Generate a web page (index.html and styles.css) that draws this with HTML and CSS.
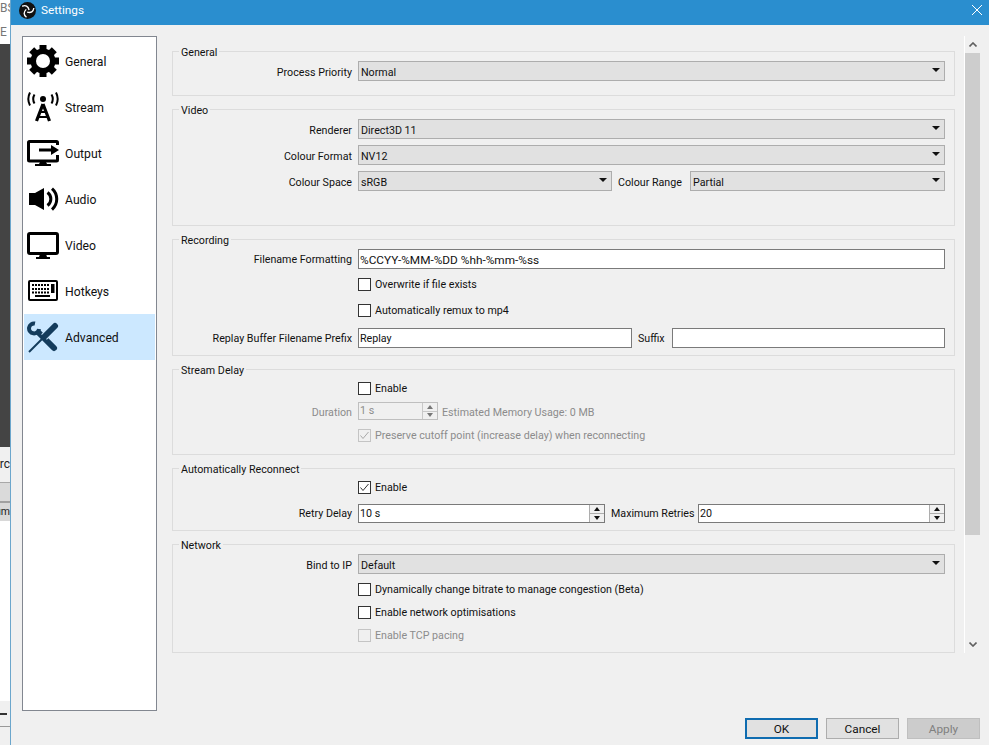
FILE: index.html
```html
<!DOCTYPE html>
<html lang="en">
<head>
    <meta charset="UTF-8">
    <title>Settings</title>
    <link rel="stylesheet" href="styles.css">
</head>
<body>
    <!-- the app behind the dialog, only a sliver shows -->
    <div class="backdrop">
        <div class="bd-top"><span>BS</span><span>E</span></div>
        <div class="bd-dark"></div>
        <div class="bd-src">rc</div>
        <div class="bd-band"></div>
        <div class="bd-sum">um</div>
        <div class="bd-white"></div>
        <div class="bd-foot"><i></i></div>
        <div class="bd-end"></div>
    </div>

    <div class="window">
        <div class="titlebar">
            <svg class="logo" viewBox="0 0 16 16">
                <circle cx="8" cy="8" r="8" fill="#111"/>
                <g fill="none" stroke="#fff" stroke-width="1.300">
                    <path d="M3 4Q8 2 9.500 7.500"/>
                    <path d="M3 4Q8 2 9.500 7.500" transform="rotate(120 8 8)"/>
                    <path d="M3 4Q8 2 9.500 7.500" transform="rotate(240 8 8)"/>
                </g>
            </svg>
            <span class="title">Settings</span>
            <svg class="close" viewBox="0 0 10 10"><path d="M0 0L10 10M10 0L0 10" stroke="#fff" stroke-width="1"/></svg>
        </div>

        <div class="body">
            <div class="sidebar">
                <div class="nav-item">
                    <svg class="nav-icon" viewBox="0 0 32 32">
                        <g fill="#000">
                            <rect x="12.500" y="0" width="7" height="32"/>
                            <rect x="0" y="12.500" width="32" height="7"/>
                            <rect x="12.500" y="0" width="7" height="32" transform="rotate(45 16 16)"/>
                            <rect x="12.500" y="0" width="7" height="32" transform="rotate(-45 16 16)"/>
                            <circle cx="16" cy="16" r="12.500"/>
                        </g>
                        <circle cx="16" cy="16" r="7" fill="#fff"/>
                    </svg>
                    <span>General</span>
                </div>
                <div class="nav-item">
                    <svg class="nav-icon" viewBox="0 0 32 32">
                        <circle cx="16" cy="8" r="3"/>
                        <g fill="none" stroke="#000" stroke-width="2">
                            <path d="M7.500 3.500a9 9 0 0 0 0 9"/>
                            <path d="M24.500 3.500a9 9 0 0 1 0 9"/>
                            <path d="M3 1.500a14 14 0 0 0 0 13"/>
                            <path d="M29 1.500a14 14 0 0 1 0 13"/>
                        </g>
                        <g fill="none" stroke="#000">
                            <path d="M16 13L9.500 30M16 13L22.500 30" stroke-width="3.200"/>
                            <path d="M12 21H20M10 26H22" stroke-width="2.200"/>
                        </g>
                    </svg>
                    <span>Stream</span>
                </div>
                <div class="nav-item">
                    <svg class="nav-icon" viewBox="0 0 32 32">
                        <path d="M30.500 8V5.500a1 1 0 0 0-1-1H2.500a1 1 0 0 0-1 1V23a1 1 0 0 0 1 1H29.500a1 1 0 0 0 1-1V18" fill="none" stroke="#000" stroke-width="3"/>
                        <path d="M12 11.500H24V8L32 13L24 18V14.500H12z"/>
                        <path d="M13 25H19L20 27H24V29H8V27H12z"/>
                    </svg>
                    <span>Output</span>
                </div>
                <div class="nav-item">
                    <svg class="nav-icon" viewBox="0 0 32 32">
                        <path d="M2 10H8L17 5V27L8 22H2z"/>
                        <g fill="none" stroke="#000" stroke-width="3">
                            <path d="M20.500 9.500a8 8 0 0 1 0 13"/>
                            <path d="M25 5.500a14 14 0 0 1 0 21"/>
                        </g>
                    </svg>
                    <span>Audio</span>
                </div>
                <div class="nav-item">
                    <svg class="nav-icon" viewBox="0 0 32 32">
                        <rect x="1.500" y="4.500" width="29" height="20" rx="1.500" fill="none" stroke="#000" stroke-width="3"/>
                        <path d="M13 25H19L20 28H23V30H9V28H12z"/>
                    </svg>
                    <span>Video</span>
                </div>
                <div class="nav-item">
                    <svg class="nav-icon" viewBox="0 0 32 32">
                        <rect x="1" y="5" width="30" height="21" rx="2"/>
                        <rect x="3" y="7" width="26" height="17" fill="#fff"/>
                        <g fill="none" stroke="#000" stroke-width="2">
                            <path d="M5 10H22" stroke-dasharray="2 1"/>
                            <path d="M5 14H22" stroke-dasharray="2 1"/>
                            <path d="M5 17.500H22" stroke-dasharray="2 1"/>
                            <path d="M8 21H23"/>
                        </g>
                        <rect x="24" y="9" width="3.500" height="9"/>
                    </svg>
                    <span>Hotkeys</span>
                </div>
                <div class="nav-item active">
                    <svg class="nav-icon" viewBox="0 0 32 32">
                        <g fill="none" stroke="#143c5c">
                            <path d="M8 2.500A5 5 0 1 0 12 8" stroke-width="4"/>
                            <path d="M12 12L27 27" stroke-width="6" stroke-linecap="round"/>
                            <path d="M28 5L17 16" stroke="#cce8ff" stroke-width="8"/>
                            <path d="M28 5L17 16" stroke-width="6" stroke-linecap="round"/>
                            <path d="M17 16L2 31" stroke-width="2"/>
                        </g>
                    </svg>
                    <span>Advanced</span>
                </div>
            </div>

            <div class="content">
                <div class="groups">
                    <div class="group">
                        <div class="group-title">General</div>
                        <div class="rows pt-general">
                            <div class="row">
                                <label>Process Priority</label>
                                <div class="combo">Normal</div>
                            </div>
                        </div>
                    </div>

                    <div class="group">
                        <div class="group-title">Video</div>
                        <div class="rows pt-video">
                            <div class="row">
                                <label>Renderer</label>
                                <div class="combo">Direct3D 11</div>
                            </div>
                            <div class="row gap-4">
                                <label>Colour Format</label>
                                <div class="combo">NV12</div>
                            </div>
                            <div class="row gap-4">
                                <label>Colour Space</label>
                                <div class="pair">
                                    <div class="combo w-space">sRGB</div>
                                    <label class="pair-label w-range">Colour Range</label>
                                    <div class="combo">Partial</div>
                                </div>
                            </div>
                        </div>
                    </div>

                    <div class="group">
                        <div class="group-title">Recording</div>
                        <div class="rows pt-rec">
                            <div class="row">
                                <label>Filename Formatting</label>
                                <div class="input format">%CCYY-%MM-%DD %hh-%mm-%ss</div>
                            </div>
                            <div class="row gap-3">
                                <label></label>
                                <div class="check"><span class="box"></span>Overwrite if file exists</div>
                            </div>
                            <div class="row gap-4">
                                <label></label>
                                <div class="check"><span class="box"></span>Automatically remux to mp4</div>
                            </div>
                            <div class="row gap-6">
                                <label>Replay Buffer Filename Prefix</label>
                                <div class="pair">
                                    <div class="input w-prefix">Replay</div>
                                    <label class="pair-label w-suffix">Suffix</label>
                                    <div class="input"></div>
                                </div>
                            </div>
                        </div>
                    </div>

                    <div class="group">
                        <div class="group-title">Stream Delay</div>
                        <div class="rows pt-delay">
                            <div class="row">
                                <label></label>
                                <div class="check"><span class="box"></span>Enable</div>
                            </div>
                            <div class="row gap-2 disabled">
                                <label>Duration</label>
                                <div class="pair">
                                    <div class="input spin w-duration">1 s
                                        <span class="spin-btns"><i class="up"></i><i class="down"></i></span>
                                    </div>
                                    <span class="note">Estimated Memory Usage: 0 MB</span>
                                </div>
                            </div>
                            <div class="row gap-1 disabled">
                                <label></label>
                                <div class="check">
                                    <span class="box">
                                        <svg viewBox="0 0 13 13"><path d="M2.500 6.500L5 9.500L10.500 3" fill="none" stroke="#a8a8a8"/></svg>
                                    </span>Preserve cutoff point (increase delay) when reconnecting
                                </div>
                            </div>
                        </div>
                    </div>

                    <div class="group">
                        <div class="group-title">Automatically Reconnect</div>
                        <div class="rows pt-reconnect">
                            <div class="row">
                                <label></label>
                                <div class="check">
                                    <span class="box">
                                        <svg viewBox="0 0 13 13"><path d="M2.500 6.500L5 9.500L10.500 3" fill="none" stroke="#333"/></svg>
                                    </span>Enable
                                </div>
                            </div>
                            <div class="row gap-4">
                                <label>Retry Delay</label>
                                <div class="pair">
                                    <div class="input spin w-retry">10 s
                                        <span class="spin-btns"><i class="up"></i><i class="down"></i></span>
                                    </div>
                                    <label class="pair-label w-max">Maximum Retries</label>
                                    <div class="input spin">20
                                        <span class="spin-btns"><i class="up"></i><i class="down"></i></span>
                                    </div>
                                </div>
                            </div>
                        </div>
                    </div>

                    <div class="group">
                        <div class="group-title">Network</div>
                        <div class="rows pt-network">
                            <div class="row">
                                <label>Bind to IP</label>
                                <div class="combo">Default</div>
                            </div>
                            <div class="row gap-2">
                                <label></label>
                                <div class="check"><span class="box"></span>Dynamically change bitrate to manage congestion (Beta)</div>
                            </div>
                            <div class="row gap-1">
                                <label></label>
                                <div class="check"><span class="box"></span>Enable network optimisations</div>
                            </div>
                            <div class="row gap-1 disabled">
                                <label></label>
                                <div class="check"><span class="box"></span>Enable TCP pacing</div>
                            </div>
                        </div>
                    </div>
                </div>

                <div class="scrollbar">
                    <svg class="arrow" viewBox="0 0 8 5"><path d="M.5 4.500L4 1L7.500 4.500" fill="none" stroke="#606060" stroke-width="1.600"/></svg>
                    <div class="thumb"></div>
                    <svg class="arrow arrow-down" viewBox="0 0 8 5"><path d="M.5 .5L4 4L7.500 .5" fill="none" stroke="#606060" stroke-width="1.600"/></svg>
                </div>
            </div>
        </div>

        <div class="buttons">
            <button class="default">OK</button>
            <button>Cancel</button>
            <button class="off">Apply</button>
        </div>
    </div>
</body>
</html>
```

FILE: styles.css
```css
* {
    box-sizing: border-box;
}
html, body {
    margin: 0;
    height: 100%;
}
body {
    display: flex;
    width: 989px;
    height: 745px;
    overflow: hidden;
    font-family: 'Roboto', 'Noto Sans', sans-serif;
    font-size: 10.700px;
    color: #111;
    background: #f0f0f0;
}

/* app behind the dialog */
.backdrop {
    width: 10px;
    height: 745px;
    flex: none;
    overflow: hidden;
    color: #444;
    white-space: nowrap;
    font-size: 12px;
}
.bd-top {
    height: 44px;
    background: #fff;
    color: #777;
    display: flex;
    flex-direction: column;
    padding-top: 1px;
    gap: 10px;
}
.bd-dark {
    height: 403px;
    background: #444;
}
.bd-src {
    height: 35px;
    background: #f0f0f0;
    line-height: 34px;
    color: #222;
    direction: rtl;
}
.bd-band {
    height: 21px;
    background: #dadada;
    border-top: 1px solid #a8a8a8;
    border-bottom: 2px solid #a0a0a0;
}
.bd-sum {
    height: 18px;
    background: #d8d8d8;
    line-height: 17px;
    color: #222;
    direction: rtl;
    font-size: 10.500px;
}
.bd-white {
    height: 180px;
    background: #fff;
}
.bd-foot {
    height: 26px;
    background: #f0f0f0;
    border-bottom: 1px solid #999;
    padding-top: 12px;
}
.bd-foot i {
    display: block;
    width: 7px;
    height: 2px;
    background: #333;
}
.bd-end {
    height: 18px;
    background: #f0f0f0;
}

/* dialog */
.window {
    flex: 1;
    display: flex;
    flex-direction: column;
    border-left: 1px solid #6ba6cc;
}
.titlebar {
    height: 25px;
    flex: none;
    background: #2a8ecf;
    color: #fff;
    display: flex;
    align-items: center;
    padding: 0 7px 0 8px;
    font-size: 11.800px;
}
.logo {
    width: 17px;
    height: 17px;
    margin-bottom: 5px;
}
.title {
    margin-left: 5px;
    margin-bottom: 6px;
}
.close {
    width: 10px;
    height: 10px;
    margin-left: auto;
    margin-bottom: 6px;
}
.body {
    height: 686px;
    flex: none;
    display: flex;
    padding: 11px 9px 0 11px;
}

/* left list */
.sidebar {
    width: 135px;
    height: 675px;
    flex: none;
    background: #fff;
    border: 1px solid #828790;
    padding: 1px;
}
.nav-item {
    height: 46px;
    display: flex;
    align-items: center;
    gap: 6px;
    padding-left: 3px;
    font-size: 12.200px;
}
.nav-item span {
    margin-top: 2px;
}
.nav-item.active {
    background: #cce8ff;
}
.nav-icon {
    width: 32px;
    height: 32px;
    flex: none;
}

/* settings groups */
.content {
    flex: 1;
    display: flex;
    padding-left: 15px;
}
.groups {
    width: 783px;
    flex: none;
    padding-top: 15px;
}
.group {
    border: 1px solid #dcdcdc;
    margin-bottom: 13px;
    padding-right: 9px;
}
.group-title {
    width: fit-content;
    height: 14px;
    margin: -8px 0 0 6px;
    padding: 0 2px;
    line-height: 18px;
    background: #f0f0f0;
}
.rows {
    display: flex;
    flex-direction: column;
}
.pt-general { padding: 3px 0 12px; }
.pt-video { padding: 3px 0 32px; }
.pt-rec { padding: 2px 0 6px; }
.pt-delay { padding: 1px 0 8px; }
.pt-reconnect { padding: 1px 0 6px; }
.pt-network { padding: 3px 0 6px; }

.row {
    height: 22px;
    display: flex;
    align-items: center;
}
.gap-1 { margin-top: 1px; }
.gap-2 { margin-top: 2px; }
.gap-3 { margin-top: 3px; }
.gap-4 { margin-top: 4px; }
.gap-6 { margin-top: 6px; }

.row > label {
    width: 179px;
    flex: none;
    margin-right: 6px;
    text-align: right;
}
.pair {
    flex: 1;
    display: flex;
    align-items: center;
}
.pair-label {
    flex: none;
    padding-left: 6px;
}
.w-range { width: 78px; }
.w-suffix { width: 40px; }
.w-max { width: 93px; }

.combo {
    flex: 1;
    height: 20px;
    margin-bottom: 2px;
    line-height: 21px;
    padding-left: 2px;
    background: #e1e1e1;
    border: 1px solid #adadad;
    position: relative;
}
/* small black drop arrow */
.combo::after {
    content: '';
    position: absolute;
    right: 4px;
    top: 6px;
    width: 0;
    height: 0;
    border-left: 4px solid transparent;
    border-right: 4px solid transparent;
    border-top: 4px solid #111;
}
.input {
    flex: 1;
    height: 20px;
    line-height: 20px;
    padding-left: 1px;
    background: #fff;
    border: 1px solid #7a7a7a;
}
.format {
    font-size: 11.800px;
}
.w-space { width: 254px; flex: none; }
.w-prefix { width: 274px; flex: none; }

.spin {
    position: relative;
    height: 19px;
    margin-top: 1px;
    line-height: 17px;
    white-space: nowrap;
}
.w-duration { width: 80px; height: 18px; line-height: 16px; margin: 0 0 2px; flex: none; }
.w-retry { width: 247px; flex: none; }
.spin-btns {
    position: absolute;
    right: 0;
    top: 0;
    bottom: 0;
    width: 15px;
    display: flex;
    flex-direction: column;
    background: #f0f0f0;
    border-left: 1px solid #adadad;
}
.spin-btns i {
    flex: 1;
    display: flex;
    align-items: center;
    justify-content: center;
}
.spin-btns .up {
    border-bottom: 1px solid #adadad;
}
.spin-btns i::before {
    content: '';
    border-left: 3px solid transparent;
    border-right: 3px solid transparent;
}
.spin-btns .up::before {
    border-bottom: 4px solid #111;
}
.spin-btns .down::before {
    border-top: 4px solid #111;
}

.check {
    display: flex;
    align-items: center;
}
.box {
    width: 13px;
    height: 13px;
    flex: none;
    margin-right: 4px;
    background: #fff;
    border: 1px solid #333;
    display: flex;
}
.box svg {
    width: 13px;
    height: 13px;
    margin: -1px;
}
.note {
    margin-left: 4px;
}

.disabled {
    color: #8c8c8c;
}
.disabled .input {
    background: #f0f0f0;
    border-color: #bfbfbf;
}
.disabled .box {
    background: #f0f0f0;
    border-color: #c4c4c4;
}
.disabled .spin-btns {
    border-color: #c8c8c8;
}
.disabled .spin-btns .up {
    border-bottom-color: #c8c8c8;
}
.disabled .spin-btns .up::before {
    border-bottom-color: #777;
}
.disabled .spin-btns .down::before {
    border-top-color: #777;
}

/* scroll strip */
.scrollbar {
    width: 16px;
    height: 617px;
    margin-left: 9px;
    flex: none;
    background: #f0f0f0;
    border-left: 1px solid #fff;
    display: flex;
    flex-direction: column;
    align-items: center;
    padding-top: 6px;
}
.arrow {
    width: 8px;
    height: 5px;
    flex: none;
}
.thumb {
    width: 15px;
    height: 482px;
    margin-top: 6px;
    background: #cdcdcd;
}
.arrow-down {
    margin-top: auto;
    margin-bottom: 6px;
}

/* dialog buttons */
.buttons {
    flex: 1;
    display: flex;
    justify-content: flex-end;
    gap: 8px;
    padding: 7px 9px 0 0;
}
button {
    width: 73px;
    height: 21px;
    padding: 0;
    font: inherit;
    font-size: 11.800px;
    color: #111;
    background: #e1e1e1;
    border: 1px solid #adadad;
}
button.default {
    border: 2px solid #0f6cb0;
}
button.off {
    background: #cccccc;
    border-color: #bfbfbf;
    color: #808080;
}
```
